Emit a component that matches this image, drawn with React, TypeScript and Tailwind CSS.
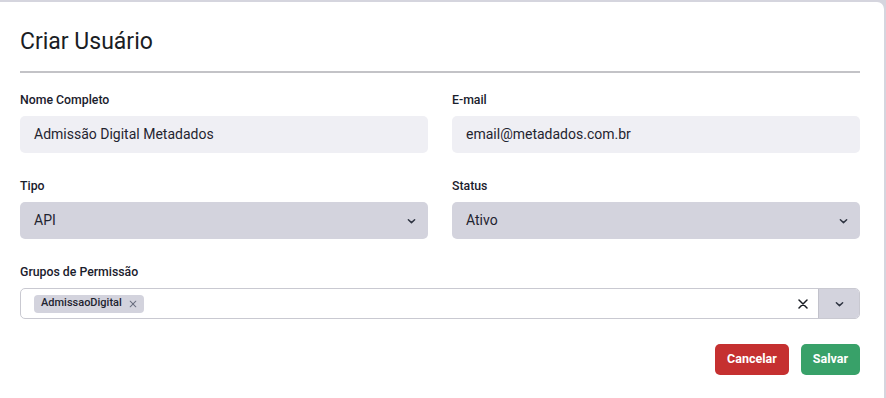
import React from 'react';

const font = { fontFamily: 'Roboto, "Liberation Sans", sans-serif' };

function Chevron({ className = '' }: { className?: string }) {
    return (
        <svg viewBox="0 0 10 6" className={className} fill="none" stroke="currentColor" strokeWidth={1.6} strokeLinecap="round" strokeLinejoin="round">
            <path d="M1.5 1.5 5 4.8 8.5 1.5" />
        </svg>
    );
}

function Field({ label, children }: { label: string; children: React.ReactNode }) {
    return (
        <div className="flex flex-col">
            <label className="text-[12.3px] leading-4 font-medium text-[#1a202c] mb-2">{label}</label>
            {children}
        </div>
    );
}

function TextInput({ value }: { value: string }) {
    return (
        <div className="h-[37px] rounded-[5px] bg-[#efeff4] px-[14px] flex items-center text-[14px] text-[#1f2430]">
            {value}
        </div>
    );
}

function SelectBox({ value }: { value: string }) {
    return (
        <div className="h-[37px] rounded-[5px] bg-[#d3d3dd] pl-[14px] pr-[12px] flex items-center justify-between text-[14px] text-[#1f2430]">
            <span>{value}</span>
            <Chevron className="w-[9px] h-[6px] text-[#2d3340]" />
        </div>
    );
}

export default function App() {
    return (
        <div className="w-[886px] h-[398px] bg-[#d5d5de] pt-[2px] pr-[2px] overflow-hidden" style={font}>
            <div className="h-full bg-white rounded-tr-[7px] pl-5 pr-6 pt-[24px]">
                <h2 className="text-[23px] leading-8 text-[#1a1d24]">Criar Usuário</h2>
                <div className="mt-[13px] h-[2px] bg-[#c3c3c7]" />

                <div className="grid grid-cols-2 gap-x-6 gap-y-[25px] mt-[19px]">
                    <Field label="Nome Completo">
                        <TextInput value="Admissão Digital Metadados" />
                    </Field>
                    <Field label="E-mail">
                        <TextInput value="email@metadados.com.br" />
                    </Field>
                    <Field label="Tipo">
                        <SelectBox value="API" />
                    </Field>
                    <Field label="Status">
                        <SelectBox value="Ativo" />
                    </Field>
                    <div className="col-span-2">
                        <Field label="Grupos de Permissão">
                            <div className="h-[31px] rounded-[5px] border border-[#c9c9d1] bg-white flex items-stretch overflow-hidden">
                                <div className="flex-1 flex items-center pl-[13px]">
                                    <span className="inline-flex items-center gap-[7px] h-[18px] rounded-[4px] bg-[#d3d3dd] pl-[7px] pr-[7px] text-[11px] font-medium text-[#1f2430]">
                                        AdmissaoDigital
                                        <svg viewBox="0 0 10 10" className="w-[8px] h-[8px] text-[#6b7080]" stroke="currentColor" strokeWidth={1.3} strokeLinecap="round">
                                            <path d="M1.5 1.5 8.5 8.5M8.5 1.5 1.5 8.5" />
                                        </svg>
                                    </span>
                                </div>
                                <div className="w-[31px] flex items-center justify-center">
                                    <svg viewBox="0 0 10 10" className="w-[10px] h-[10px] text-[#1a1d24]" stroke="currentColor" strokeWidth={1.5} strokeLinecap="round">
                                        <path d="M1 1 9 9M9 1 1 9" />
                                    </svg>
                                </div>
                                <div className="w-[41px] bg-[#d3d3dd] border-l border-[#c2c2cb] flex items-center justify-center">
                                    <Chevron className="w-[9px] h-[6px] text-[#2d3340]" />
                                </div>
                            </div>
                        </Field>
                    </div>
                </div>

                <div className="flex justify-end gap-3 mt-[25px]">
                    <button className="h-[31px] px-3 rounded-[5px] bg-[#c53030] text-white text-[12.5px] font-bold">Cancelar</button>
                    <button className="h-[31px] px-3 rounded-[5px] bg-[#38a169] text-white text-[12.5px] font-bold">Salvar</button>
                </div>
            </div>
        </div>
    );
}
